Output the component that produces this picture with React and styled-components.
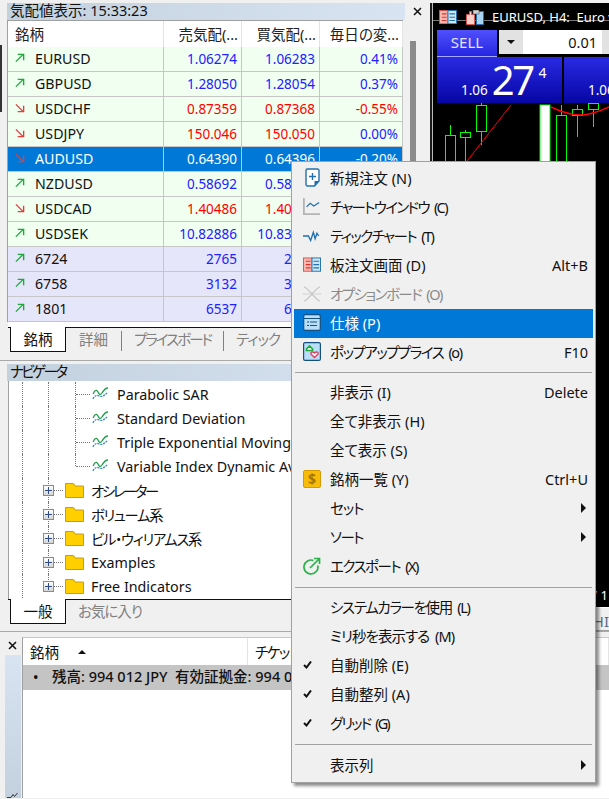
import React from 'react'
import styled, { createGlobalStyle } from 'styled-components'

const uiFont = '"Noto Sans", "Noto Sans CJK JP", sans-serif'

const GlobalStyle = createGlobalStyle`
html, body {
    margin: 0;
    padding: 0;
    background: #f0f0f0;
}
* {
    box-sizing: border-box;
}
`

const Page = styled.div`
position: relative;
width: 609px;
height: 799px;
overflow: hidden;
background: #f0f0f0;
font-family: ${uiFont};
font-size: 14.5px;
font-feature-settings: "palt";
color: #111;
`

const Workspace = styled.div`
display: flex;
height: 632px;
border-bottom: 1px solid #a9a9a9;
`

const Docks = styled.div`
width: 430px;
flex: none;
display: flex;
flex-direction: column;
padding-left: 7px;
`

const QuotePanel = styled.section`
position: relative;
height: 361px;
padding-top: 3px;
border-bottom: 1px solid #a9a9a9;
margin-left: -7px;
padding-left: 7px;
&::before {
    content: '';
    position: absolute;
    left: 0;
    top: 45px;
    width: 2px;
    height: 67px;
    background: #333;
}
`

const TitleRow = styled.div`
display: flex;
align-items: center;
height: 17px;
`

const TitleBar = styled.div`
width: ${p => p.$width}px;
height: 17px;
line-height: 15px;
padding-left: 3px;
white-space: nowrap;
letter-spacing: ${p => p.$track || 0}px;
background: linear-gradient(90deg, #c3d0de, #d8e4f1);
`

const CloseButton = styled.svg`
width: 9px;
height: 9px;
margin-left: ${p => (p.$flush ? 0 : 8)}px;
flex: none;
`

const QuoteBody = styled.div`
display: flex;
height: 302px;
`

const QuoteTable = styled.div`
width: 396px;
flex: none;
border-left: 1px solid #a0a0a0;
border-top: 1px solid #a0a0a0;
`

const Scrollbar = styled.div`
width: 15px;
padding: 21px 2px 0 7px;
background: #f0f0f0;
`

const ScrollThumb = styled.div`
height: 280px;
background: #8a8a8a;
`

const HeaderRow = styled.div`
display: grid;
grid-template-columns: 156px 78px 78px 83px;
height: 26px;
background: #fff;
`

const HeaderCell = styled.div`
padding: 0 ${p => (p.$left ? 0 : 3)}px 0 ${p => (p.$left ? 7 : 0)}px;
line-height: 26px;
text-align: ${p => (p.$left ? 'left' : 'right')};
border-right: 1px solid #e4e4e4;
white-space: nowrap;
overflow: hidden;
color: #222;
`

const QuoteRow = styled.div`
display: grid;
grid-template-columns: 156px 78px 78px 83px;
height: 25px;
border-bottom: 1px solid #c6c6c6;
background: ${p => (p.$selected ? '#0078d7' : p.$stock ? '#e6e6fa' : '#f0fff0')};
color: ${p => (p.$selected ? '#fff' : '#111')};
`

const SymbolCell = styled.div`
display: flex;
align-items: center;
gap: 10px;
padding: 0 0 2px 7px;
font-size: 14.2px;
border-right: 1px solid #c6c6c6;
`

const PriceCell = styled.div`
line-height: 24px;
font-size: 13.5px;
text-align: right;
padding-right: 4px;
overflow: hidden;
white-space: nowrap;
border-right: 1px solid #c6c6c6;
color: ${p => (p.$selected ? '#fff' : p.$down ? '#ff0000' : '#2020ff')};
`

const TabStrip = styled.div`
display: flex;
align-items: flex-start;
height: ${p => p.$height}px;
margin-left: 1px;
width: 410px;
border-top: 1.5px solid #111;
background: #f0f0f0;
`

const ActiveTab = styled.div`
width: 56px;
height: 25px;
margin: -1.5px 0 0 2px;
text-align: center;
line-height: 24px;
background: #fff;
border: 1.5px solid #111;
border-top: 0;
`

const Tab = styled.div`
margin-top: 3px;
padding: 0 ${p => p.$pad}px;
height: 20px;
line-height: 17px;
color: #808080;
letter-spacing: ${p => p.$track || 0}px;
border-right: ${p => (p.$divider ? '1px solid #808080' : '0')};
white-space: nowrap;
`

const TabGap = styled.div`
height: 5px;
width: 396px;
margin-left: 1px;
background: #fff;
`

const NavPanel = styled.section`
padding-top: 3px;
`

const NavTree = styled.div`
width: 411px;
height: 218px;
margin-left: 1px;
padding-top: 1px;
background: #fff;
border-left: 1px solid #a0a0a0;
overflow: hidden;
`

const TreeRow = styled.div`
position: relative;
display: flex;
align-items: center;
height: 24px;
padding-left: ${p => p.$indent}px;
white-space: nowrap;
font-size: 14.3px;
`

const TreeLabel = styled.span`
letter-spacing: ${p => p.$track || 0}px;
`

const Guide = styled.span`
position: absolute;
left: ${p => p.$x}px;
top: 0;
height: ${p => (p.$half ? '50%' : '100%')};
border-left: 1px dotted #777;
`

const Connector = styled.span`
width: ${p => p.$width}px;
flex: none;
border-top: 1px dotted #777;
`

const Expander = styled.span`
position: relative;
width: 11px;
height: 11px;
flex: none;
background: linear-gradient(#fff, #d5d5d5);
border: 1px solid #8a8a8a;
&::before,
&::after {
    content: '';
    position: absolute;
    background: #2c4a8c;
}
&::before {
    left: 1px;
    right: 1px;
    top: 4px;
    height: 1px;
}
&::after {
    top: 1px;
    bottom: 1px;
    left: 4px;
    width: 1px;
}
`

const TreeIcon = styled.svg`
flex: none;
width: ${p => p.$w}px;
height: 16px;
margin: 0 ${p => p.$gap}px 0 2px;
`

const ChartWindow = styled.div`
position: relative;
flex: 1;
margin-top: 3px;
background: #000;
border-left: 2px solid #1a1a1a;
display: flex;
flex-direction: column;
overflow: hidden;
`

const ChartCanvas = styled.div`
position: relative;
height: 604px;
border-left: 1px solid #bbb;
background: #000;
flex: none;
`

const ChartDrawing = styled.svg`
display: block;
width: 177px;
height: 579px;
`

const ChartTitle = styled.div`
position: absolute;
left: 59px;
top: 5px;
color: #fff;
font-size: 13px;
white-space: pre;
`

const ChartBadges = styled.div`
position: absolute;
left: 6px;
top: 7px;
display: flex;
gap: 9px;
`

const AxisLabel = styled.div`
position: absolute;
right: 1px;
top: 583px;
color: #fff;
font-size: 13px;
`

const ChartTabs = styled.div`
flex: 1;
background: #f0f0f0;
border-top: 1px solid #fff;
border-bottom: 1px solid #a0a0a0;
text-align: right;
line-height: 26px;
font-size: 15px;
color: #5a6a8a;
overflow: hidden;
white-space: nowrap;
`

const TradePanel = styled.div`
position: absolute;
left: 4px;
top: 27px;
width: 190px;
display: grid;
grid-template-columns: 60px 130px;
`

const SellButton = styled.div`
height: 27px;
text-align: center;
line-height: 25px;
font-size: 15px;
color: #e4e4ff;
background: linear-gradient(#5050ff, #2424e0);
box-shadow: inset 0 -1px 0 #a8a8ff;
`

const LotControls = styled.div`
display: flex;
height: 24px;
margin-left: 2px;
background: #fff;
`

const LotArrow = styled.div`
width: 24px;
flex: none;
background: #e2e2e2;
display: flex;
align-items: center;
justify-content: center;
&::before {
    content: '';
    border: 4px solid transparent;
    border-top: 4px solid #111;
    margin-top: 4px;
}
`

const LotValue = styled.div`
flex: none;
width: 78px;
text-align: right;
padding-right: 4px;
line-height: 24px;
color: #111;
`

const LotStep = styled.div`
width: 26px;
background: #e2e2e2;
margin-left: 1px;
`

const PriceBoxes = styled.div`
grid-column: 1 / 3;
display: flex;
gap: 2px;
`

const PriceBox = styled.div`
flex: none;
width: 125px;
height: 46px;
display: flex;
align-items: baseline;
padding: 3px 0 0 24px;
color: #fff;
background: linear-gradient(#2a2ae4, #0606a4);
white-space: nowrap;
overflow: hidden;
`

const PriceHandle = styled.span`
font-size: 13.5px;
margin-right: 4px;
`

const PriceBig = styled.span`
font-size: 40px;
line-height: 40px;
letter-spacing: -2.5px;
`

const PricePip = styled.span`
font-size: 14px;
line-height: 14px;
align-self: flex-start;
margin: 6px 0 0 6px;
`

const Terminal = styled.div`
display: flex;
height: 166px;
`

const TerminalRail = styled.div`
width: 22px;
flex: none;
display: flex;
flex-direction: column;
align-items: center;
padding: 9px 1px 0 4px;
`

const RailStrip = styled.div`
width: 16px;
flex: 1;
margin-top: 5px;
display: flex;
align-items: flex-end;
justify-content: center;
background: linear-gradient(#d8e4f1, #c3d0de);
`

const TerminalTable = styled.div`
flex: 1;
margin-top: 5px;
background: #fff;
border-left: 1px solid #a0a0a0;
border-top: 1px solid #c8c8c8;
overflow: hidden;
`

const TerminalHead = styled.div`
display: grid;
grid-template-columns: 225px 1fr;
height: 27px;
line-height: 26px;
white-space: nowrap;
`

const TerminalHeadCell = styled.div`
display: flex;
align-items: center;
gap: 19px;
padding-left: 7px;
border-right: 1px solid #e4e4e4;
letter-spacing: ${p => p.$track || 0}px;
`

const SortCaret = styled.span`
border: 4px solid transparent;
border-bottom: 4px solid #111;
margin-top: -4px;
`

const BalanceRow = styled.div`
display: flex;
gap: 7px;
height: 25px;
padding-left: 10px;
line-height: 23px;
background: #c4c4c4;
white-space: nowrap;
font-weight: 500;
`

const BalanceBullet = styled.span`
width: 12px;
flex: none;
`

const ContextMenu = styled.nav`
position: absolute;
left: 291px;
top: 161px;
width: 305px;
height: 622px;
padding: 2px 2px 0;
background: #f0f0f0;
border: 1px solid #a0a0a0;
box-shadow: 3px 3px 3px rgba(0, 0, 0, 0.45);
`

const MenuItem = styled.div`
display: flex;
align-items: center;
height: 29px;
padding: 0 5px 2px 9px;
white-space: nowrap;
background: ${p => (p.$active ? '#0078d7' : 'transparent')};
color: ${p => (p.$active ? '#fff' : p.$disabled ? '#8a8a8a' : '#111')};
`

const MenuGlyph = styled.span`
display: flex;
align-items: center;
justify-content: center;
width: 18px;
height: 18px;
margin-right: 9px;
flex: none;
`

const MenuLabel = styled.span`
flex: 1;
letter-spacing: ${p => p.$track || 0}px;
word-spacing: ${p => (p.$track ? 3 : 0)}px;
`

const SubmenuArrow = styled.span`
border: 5px solid transparent;
border-left: 5px solid #111;
border-right: 0;
margin-right: 2px;
`

const MenuSeparator = styled.div`
height: 1px;
margin: ${p => p.$before}px 1px ${p => p.$after}px;
background: #a0a0a0;
`

const CloseIcon = ({ flush }) => (
    <CloseButton viewBox="0 0 9 9" $flush={flush}>
        <path d="M1 1l7 7M8 1l-7 7" stroke="#111" strokeWidth="1.5" />
    </CloseButton>
)

const TrendArrow = ({ down }) => (
    <svg width="10" height="10" viewBox="0 0 11 11" style={{ flex: 'none' }}>
        {down
            ? <path d="M1 1.5l8 8M3 9.500h6.500v-6.500" fill="none" stroke="#e04040" strokeWidth="1.500" />
            : <path d="M1 9.500l8-8M3 1.500h6.500v6.500" fill="none" stroke="#1fa83c" strokeWidth="1.500" />}
    </svg>
)

const IndicatorIcon = () => (
    <TreeIcon $w={17} $gap={8} viewBox="0 0 17 16">
        <path d="M1 8c2-5 4-4 5-2s2 4 4 1 3-5 6-5" fill="none" stroke="#1f9e4a" strokeWidth="1.300" />
        <path d="M1 13c2-4 4-4 6-3s4 1 9-4" fill="none" stroke="#2f7fbf" strokeWidth="1.200" strokeDasharray="2 1" />
    </TreeIcon>
)

const FolderIcon = () => (
    <TreeIcon $w={19} $gap={7} viewBox="0 0 19 16">
        <path d="M.5 1.500h8l1.500 2.500h8.500v11.500h-18z" fill="#ffcf00" stroke="#c99a1e" />
    </TreeIcon>
)

const NewOrderIcon = () => (
    <svg width="15" height="19" viewBox="0 0 15 19">
        <path d="M2.500 1h10a1.500 1.500 0 0 1 1.500 1.500v10.500l-4.500 5h-7a1.500 1.500 0 0 1-1.500-1.500v-14a1.500 1.500 0 0 1 1.500-1.500z" fill="#fff" stroke="#1f70b0" strokeWidth="1.400" />
        <path d="M7.500 5v7M4 8.500h7" stroke="#1f70b0" strokeWidth="1.400" />
        <path d="M9.500 18v-5h4.500z" fill="#1f70b0" />
    </svg>
)

const ChartWindowIcon = () => (
    <svg width="20" height="19" viewBox="0 0 20 19">
        <path d="M1 0v18h18" fill="none" stroke="#b4b4b4" strokeWidth="2" />
        <path d="M4 10l4-4 4 3 6-4" fill="none" stroke="#1f70b0" strokeWidth="1.300" />
    </svg>
)

const TickIcon = () => (
    <svg width="20" height="14" viewBox="0 0 20 14">
        <path d="M0 7h6l2.500 5 3-9 2 7 2-6 2 3" fill="none" stroke="#1f70b0" strokeWidth="1.500" />
    </svg>
)

const DepthIcon = ({ size = 19 }) => (
    <svg width={size} height={size * 0.8} viewBox="0 0 19 15">
        <rect x="0.500" y="0.500" width="9" height="14" fill="#f8b8b0" stroke="#d9534f" />
        <rect x="9.500" y="0.500" width="9" height="14" fill="#cfe6f7" stroke="#1f70b0" />
        <path d="M3 4h5M3 7.500h5M3 11h5" stroke="#d9332f" strokeWidth="1.200" />
        <path d="M11 4h6M11 7.500h6M11 11h6" stroke="#1f70b0" strokeWidth="1.200" />
    </svg>
)

const OrderPanelIcon = () => (
    <svg width="18" height="15" viewBox="0 0 18 15">
        <path d="M.5 14.500v-10h3v-3h2v3h3v10z" fill="#fbd0ca" stroke="#d9534f" />
        <path d="M10.500 14.500v-13h7v13z" fill="#a8d4f2" stroke="#1f70b0" />
        <rect x="7" y="0" width="6" height="4" fill="#cfcfcf" stroke="#555" strokeWidth="0.600" />
    </svg>
)

const OptionBoardIcon = () => (
    <svg width="20" height="18" viewBox="0 0 20 18">
        <path d="M1 1c5 2 7 6 9 8s4 6 9 8M19 1c-5 2-7 6-9 8s-4 6-9 8" fill="none" stroke="#c4c4c4" strokeWidth="1.300" />
        <path d="M0 9h20" stroke="#c4c4c4" strokeDasharray="2 1" />
    </svg>
)

const SpecIcon = () => (
    <svg width="18" height="17" viewBox="0 0 18 17">
        <rect x="0.700" y="0.700" width="16.600" height="15.600" rx="1.500" fill="#b9def8" stroke="#14507f" strokeWidth="1.200" />
        <path d="M1 4.500h16" stroke="#14507f" />
        <path d="M4 8h2M7 8h7M4 11.500h2M7 11.500h7" stroke="#14507f" strokeWidth="1.200" />
    </svg>
)

const PopupIcon = () => (
    <svg width="18" height="19" viewBox="0 0 18 19">
        <rect x="0.600" y="0.600" width="16.800" height="17.800" rx="1.500" fill="#b9def8" stroke="#14507f" strokeWidth="1.200" />
        <path d="M3.500 8.500v-1.500l3-3 3 3v1.500z" fill="#fff" stroke="#1fa83c" strokeWidth="1.600" />
        <path d="M11.500 15.500l-3.500-3.500c-.8-1.500 1.500-3 3.500-1 2-2 4.300-.5 3.500 1z" fill="#fff" stroke="#e04060" strokeWidth="1.400" />
    </svg>
)

const DollarIcon = styled.span`
display: block;
width: 18px;
height: 18px;
border-radius: 2px;
background: #f7bc0a;
border: 1px solid #d99a00;
color: #a87400;
font-weight: 700;
font-size: 14px;
line-height: 16px;
text-align: center;
`

const ExportIcon = () => (
    <svg width="18" height="18" viewBox="0 0 18 18">
        <path d="M10.500 3.500A7 7 0 1 0 14.800 8.500" fill="none" stroke="#2bb04a" strokeWidth="1.700" />
        <path d="M7 11l9-9M11 1.500h5.500v5.500" fill="none" stroke="#2bb04a" strokeWidth="1.700" />
    </svg>
)

const CheckIcon = () => (
    <svg width="9" height="8" viewBox="0 0 9 8" style={{ marginLeft: -9 }}>
        <path d="M1 4l2.500 2.500 4.500-6" fill="none" stroke="#111" strokeWidth="2" />
    </svg>
)

const RailIcon = () => (
    <svg width="11" height="5" viewBox="0 0 11 5">
        <path d="M0 4.500h4l2-3 1.500 2 3-3.500" fill="none" stroke="#333" />
    </svg>
)

const quotes = [
    ['EURUSD', '1.06274', '1.06283', '0.41%'],
    ['GBPUSD', '1.28050', '1.28054', '0.37%'],
    ['USDCHF', '0.87359', '0.87368', '-0.55%', 'down'],
    ['USDJPY', '150.046', '150.050', '0.00%', 'down'],
    ['AUDUSD', '0.64390', '0.64396', '-0.20%', 'down', 'selected'],
    ['NZDUSD', '0.58692', '0.58696', '0.12%'],
    ['USDCAD', '1.40486', '1.40490', '-0.14%', 'down'],
    ['USDSEK', '10.82886', '10.83012', '0.21%'],
    ['6724', '2765', '2770', '0.51%', '', '', 'stock'],
    ['6758', '3132', '3135', '0.32%', '', '', 'stock'],
    ['1801', '6537', '6540', '0.62%', '', '', 'stock'],
]

const indicators = ['Parabolic SAR', 'Standard Deviation', 'Triple Exponential Moving Average', 'Variable Index Dynamic Average']
const folders = [
    { name: 'オシレーター', track: -2.3 },
    { name: 'ボリューム系', track: -1.3 },
    { name: 'ビル・ウィリアムス系', track: -1.2 },
    { name: 'Examples' },
    { name: 'Free Indicators' },
]

const menuSections = [
    [
        { label: '新規注文 (N)', icon: <NewOrderIcon /> },
        { label: 'チャートウインドウ (C)', icon: <ChartWindowIcon />, track: -1.65 },
        { label: 'ティックチャート (T)', icon: <TickIcon />, track: -1.55 },
        { label: '板注文画面 (D)', icon: <DepthIcon />, hint: 'Alt+B' },
        { label: 'オプションボード (O)', icon: <OptionBoardIcon />, disabled: true, track: -1.55 },
        { label: '仕様 (P)', icon: <SpecIcon />, active: true },
        { label: 'ポップアッププライス (o)', icon: <PopupIcon />, hint: 'F10', track: -1.5 },
    ],
    [
        { label: '非表示 (I)', hint: 'Delete' },
        { label: '全て非表示 (H)' },
        { label: '全て表示 (S)' },
        { label: '銘柄一覧 (Y)', icon: <DollarIcon>$</DollarIcon>, hint: 'Ctrl+U' },
        { label: 'セット', submenu: true, track: -1 },
        { label: 'ソート', submenu: true, track: -1.5 },
        { label: 'エクスポート (X)', icon: <ExportIcon />, track: -1.5 },
    ],
    [
        { label: 'システムカラーを使用 (L)', track: -1.35 },
        { label: 'ミリ秒を表示する (M)', track: -0.95 },
        { label: '自動削除 (E)', icon: <CheckIcon /> },
        { label: '自動整列 (A)', icon: <CheckIcon /> },
        { label: 'グリッド (G)', icon: <CheckIcon />, track: -1.9 },
    ],
    [
        { label: '表示列', submenu: true },
    ],
]

// spacing of the rule after each section: above, below
const separators = [[5, 5], [6, 5], [6, 6]]

// x, top, bottom of the candle body, wick top and bottom, in chart coordinates
const candles = [
    [12, 132, 200, 122, 200],
    [27, 129, 134, 127, 160],
    [43, 102, 128, 100, 142],
    [123, 112, 200, 102, 200],
    [139, 106, 112, 102, 134],
    [155, 100, 106, 100, 124],
]

const ChartPicture = () => (
    <ChartDrawing viewBox="0 0 177 579">
        <path d="M0 17.500H177" stroke="#777" />
        {candles.map(([x, top, bottom, wickTop, wickBottom]) => (
            <g key={x} stroke="#00ff00" fill="none">
                <path d={`M${x + 5}.5 ${wickTop}V${top}M${x + 5}.5 ${bottom}V${wickBottom}`} />
                <rect x={x + 0.5} y={top + 0.5} width="10" height={bottom - top} />
            </g>
        ))}
        <rect x="107" y="102" width="10" height="100" fill="#fff" stroke="#00ff00" />
        <path d="M78 102L34 158" stroke="#ff0000" fill="none" />
        <path d="M118 104Q135 112 147 112T176 104" stroke="#ff0000" strokeWidth="1.500" fill="none" />
    </ChartDrawing>
)

const App = () => (
    <Page>
        <GlobalStyle />
        <Workspace>
            <Docks>
                <QuotePanel>
                    <TitleRow>
                        <TitleBar $width={398}>気配値表示: 15:33:23</TitleBar>
                        <CloseIcon />
                    </TitleRow>
                    <QuoteBody>
                        <QuoteTable>
                            <HeaderRow>
                                <HeaderCell $left>銘柄</HeaderCell>
                                <HeaderCell>売気配(...</HeaderCell>
                                <HeaderCell>買気配(...</HeaderCell>
                                <HeaderCell>毎日の変...</HeaderCell>
                            </HeaderRow>
                            {quotes.map(([symbol, bid, ask, change, dir, selected, stock]) => (
                                <QuoteRow key={symbol} $selected={!!selected} $stock={!!stock}>
                                    <SymbolCell>
                                        <TrendArrow down={dir === 'down'} />
                                        {symbol}
                                    </SymbolCell>
                                    <PriceCell $down={dir === 'down'} $selected={!!selected}>{bid}</PriceCell>
                                    <PriceCell $down={dir === 'down'} $selected={!!selected}>{ask}</PriceCell>
                                    <PriceCell $down={change.startsWith('-')} $selected={!!selected}>{change}</PriceCell>
                                </QuoteRow>
                            ))}
                        </QuoteTable>
                        <Scrollbar>
                            <ScrollThumb />
                        </Scrollbar>
                    </QuoteBody>
                    <TabGap />
                    <TabStrip $height={26}>
                        <ActiveTab>銘柄</ActiveTab>
                        <Tab $pad={13} $divider>詳細</Tab>
                        <Tab $pad={12} $track={-2} $divider>プライスボード</Tab>
                        <Tab $pad={12} $track={-1}>ティック</Tab>
                    </TabStrip>
                </QuotePanel>
                <NavPanel>
                    <TitleBar $width={411} $track={-2.5}>ナビゲータ</TitleBar>
                    <NavTree>
                        {indicators.map((name, i) => (
                            <TreeRow key={name} $indent={67}>
                                <Guide $x={13} />
                                <Guide $x={39} />
                                <Guide $x={66} $half={i === indicators.length - 1} />
                                <Connector $width={14} />
                                <IndicatorIcon />
                                {name}
                            </TreeRow>
                        ))}
                        {folders.map(({ name, track }, i) => (
                            <TreeRow key={name} $indent={34}>
                                <Guide $x={13} />
                                <Guide $x={39} $half={i === folders.length - 1} />
                                <Expander />
                                <Connector $width={9} />
                                <FolderIcon />
                                <TreeLabel $track={track}>{name}</TreeLabel>
                            </TreeRow>
                        ))}
                    </NavTree>
                    <TabStrip $height={28}>
                        <ActiveTab>一般</ActiveTab>
                        <Tab $pad={12} $track={-1}>お気に入り</Tab>
                    </TabStrip>
                </NavPanel>
            </Docks>
            <ChartWindow>
                <ChartCanvas>
                    <ChartPicture />
                    <ChartBadges>
                        <DepthIcon size={18} />
                        <OrderPanelIcon />
                    </ChartBadges>
                    <ChartTitle>EURUSD, H4:  Euro vs</ChartTitle>
                    <TradePanel>
                        <SellButton>SELL</SellButton>
                        <LotControls>
                            <LotArrow />
                            <LotValue>0.01</LotValue>
                            <LotStep />
                        </LotControls>
                        <PriceBoxes>
                            <PriceBox>
                                <PriceHandle>1.06</PriceHandle>
                                <PriceBig>27</PriceBig>
                                <PricePip>4</PricePip>
                            </PriceBox>
                            <PriceBox>
                                <PriceHandle>1.06</PriceHandle>
                                <PriceBig>28</PriceBig>
                                <PricePip>3</PricePip>
                            </PriceBox>
                        </PriceBoxes>
                    </TradePanel>
                    <AxisLabel>/ 1</AxisLabel>
                </ChartCanvas>
                <ChartTabs>HI</ChartTabs>
            </ChartWindow>
        </Workspace>
        <Terminal>
            <TerminalRail>
                <CloseIcon flush />
                <RailStrip>
                    <RailIcon />
                </RailStrip>
            </TerminalRail>
            <TerminalTable>
                <TerminalHead>
                    <TerminalHeadCell>銘柄<SortCaret /></TerminalHeadCell>
                    <TerminalHeadCell $track={-1.5}>チケット</TerminalHeadCell>
                </TerminalHead>
                <BalanceRow>
                    <BalanceBullet>•</BalanceBullet>
                    残高: 994 012 JPY&nbsp;&nbsp;有効証拠金: 994 012
                </BalanceRow>
            </TerminalTable>
        </Terminal>
        <ContextMenu>
            {menuSections.map((items, s) => (
                <React.Fragment key={s}>
                    {items.map(item => (
                        <MenuItem key={item.label} $active={item.active} $disabled={item.disabled}>
                            <MenuGlyph>{item.icon}</MenuGlyph>
                            <MenuLabel $track={item.track}>{item.label}</MenuLabel>
                            {item.hint}
                            {item.submenu && <SubmenuArrow />}
                        </MenuItem>
                    ))}
                    {separators[s] && <MenuSeparator $before={separators[s][0]} $after={separators[s][1]} />}
                </React.Fragment>
            ))}
        </ContextMenu>
    </Page>
)

export default App
